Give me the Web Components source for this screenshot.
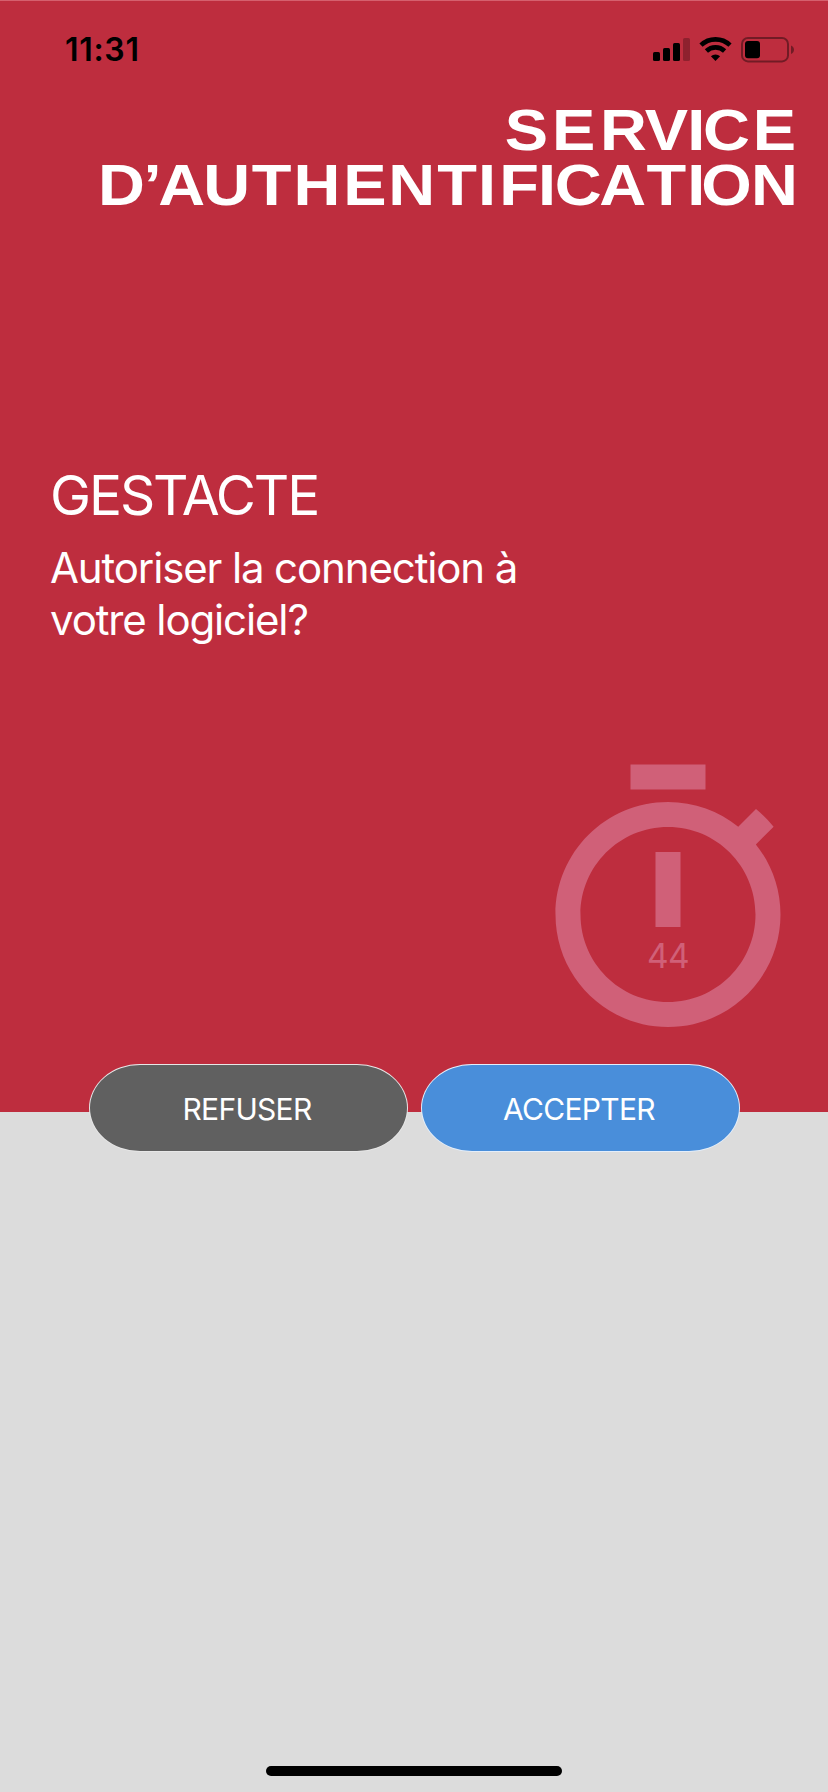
<!DOCTYPE html>
<html lang="fr">
<head>
<meta charset="utf-8">
<title>Service d'authentification</title>
<style>
    body {
        margin: 0;
        background: #dcdcdc;
        font-family: Inter, "Liberation Sans", sans-serif;
    }
</style>
</head>
<body>
<auth-screen>
    <status-bar slot="status" time="11:31"></status-bar>
    <brand-title slot="title"></brand-title>
    <auth-request slot="request" name="GESTACTE">Autoriser la connection à<br>votre logiciel?</auth-request>
    <count-down slot="timer" seconds="44"></count-down>
    <pill-button slot="actions" style="--fill: #606060">REFUSER</pill-button>
    <pill-button slot="actions" style="--fill: #498eda">ACCEPTER</pill-button>
</auth-screen>
<script>
class StatusBar extends HTMLElement {
    constructor() {
        super();
        this.root = this.attachShadow({ mode: 'open' });
        this.root.innerHTML = /*html*/`
            <style>
                :host {
                    display: flex;
                    justify-content: space-between;
                    height: 100px;
                    padding: 0 32px 0 65px;
                    box-sizing: border-box;
                    color: #000;
                }
                time {
                    padding-top: 30px;
                    font-size: 32px;
                    line-height: 40px;
                    font-weight: 600;
                    letter-spacing: 0.7px;
                }
                svg {
                    display: block;
                    margin-top: 30px;
                }
            </style>
            <time>${this.getAttribute('time')}</time>
            <svg width="146" height="40" viewBox="650 30 146 40">
                <rect x="653" y="52" width="7" height="9" rx="1.6"/>
                <rect x="663" y="48" width="7" height="13" rx="1.6"/>
                <rect x="673" y="43" width="7" height="18" rx="1.6"/>
                <rect x="683" y="38" width="7" height="23" rx="1.6" opacity=".25"/>
                <g fill="none" stroke="#000" stroke-width="4.6">
                    <path d="M701 45.2a21 21 0 0 1 29 0"/>
                    <path d="M706.4 51a13.2 13.2 0 0 1 18.2 0"/>
                </g>
                <path d="M715.5 61l-4.6-4.7a6.8 6.8 0 0 1 9.2 0z"/>
                <rect x="742" y="38" width="46" height="23.4" rx="6" fill="none" stroke="#000" stroke-width="2" opacity=".4"/>
                <path d="M791 45.5c4 1.4 4 7 0 8.6z" opacity=".4"/>
                <rect x="745" y="41" width="15" height="17.2" rx="3"/>
            </svg>
        `;
    }
}
window.customElements.define('status-bar', StatusBar);

class BrandTitle extends HTMLElement {
    // Wide lettering: every glyph is centred on its own x
    lines = [
        {
            text: 'SERVICE',
            y: 50,
            centers: [526.3, 573.7, 623.5, 666.3, 696.2, 726.5, 774.5],
        },
        {
            text: 'D’AUTHENTIFICATION',
            y: 105,
            centers: [121.5, 152.5, 181.7, 226.7, 271.5, 317, 365, 411.8, 457.2, 487, 519, 547, 578.2, 622.7, 666.4, 696.2, 726.5, 774.5],
        },
    ];
    constructor() {
        super();
        this.root = this.attachShadow({ mode: 'open' });
        const stretch = 1.12;
        const rows = this.lines.map(({ text, y, centers }) => {
            const x = centers.map(center => (center / stretch).toFixed(2)).join(' ');
            return `<text transform="scale(${stretch} 1)" x="${x}" y="${y}">${text}</text>`;
        }).join('');
        this.root.innerHTML = /*html*/`
            <style>
                :host {
                    display: block;
                    height: 120px;
                }
                svg {
                    display: block;
                    overflow: visible;
                }
                text {
                    font-family: "Liberation Sans", sans-serif;
                    font-size: 58px;
                    font-weight: 700;
                    text-anchor: middle;
                    fill: #fff;
                }
            </style>
            <svg width="828" height="120">${rows}</svg>
        `;
    }
}
window.customElements.define('brand-title', BrandTitle);

class AuthRequest extends HTMLElement {
    constructor() {
        super();
        this.root = this.attachShadow({ mode: 'open' });
        this.root.innerHTML = /*html*/`
            <style>
                :host {
                    display: block;
                    padding: 0 50px;
                    color: #fff;
                }
                h1 {
                    margin: 0;
                    font-size: 55px;
                    line-height: 66px;
                    font-weight: 400;
                    letter-spacing: -2.1px;
                }
                p {
                    margin: 14px 0 0;
                    font-size: 42px;
                    line-height: 52px;
                    letter-spacing: -1.13px;
                }
            </style>
            <h1>${this.getAttribute('name')}</h1>
            <p><slot></slot></p>
        `;
    }
}
window.customElements.define('auth-request', AuthRequest);

class CountDown extends HTMLElement {
    constructor() {
        super();
        this.root = this.attachShadow({ mode: 'open' });
        this.root.innerHTML = /*html*/`
            <style>
                :host {
                    display: grid;
                    width: 300px;
                    height: 300px;
                    color: #d06078;
                }
                svg, span {
                    grid-area: 1 / 1;
                }
                span {
                    justify-self: center;
                    padding-top: 184px;
                    font-size: 33.5px;
                    line-height: 40px;
                    font-weight: 400;
                    letter-spacing: -0.6px;
                }
            </style>
            <svg width="300" height="300" viewBox="0 0 24 24" fill="currentColor">
                <path d="M15 1H9v2h6V1zm-4 13h2V8h-2v6zm8.03-6.61l1.42-1.42c-.43-.51-.9-.99-1.41-1.41l-1.42 1.42C16.07 4.74 14.12 4 12 4c-4.97 0-9 4.03-9 9s4.02 9 9 9 9-4.03 9-9c0-2.12-.74-4.07-1.97-5.61zM12 20c-3.87 0-7-3.13-7-7s3.13-7 7-7 7 3.13 7 7-3.13 7-7 7z"/>
            </svg>
            <span>${this.getAttribute('seconds')}</span>
        `;
    }
}
window.customElements.define('count-down', CountDown);

class PillButton extends HTMLElement {
    constructor() {
        super();
        this.root = this.attachShadow({ mode: 'open' });
        this.root.innerHTML = /*html*/`
            <style>
                :host {
                    display: block;
                    width: 319px;
                    height: 88px;
                }
                button {
                    display: block;
                    width: 100%;
                    height: 100%;
                    padding: 1px 2px 0 0;
                    border: 1px solid rgba(255, 255, 255, 0.85);
                    border-radius: 51px / 44px;
                    background: var(--fill);
                    color: #fff;
                    font: 370 30px Inter, "Liberation Sans", sans-serif;
                    letter-spacing: -0.7px;
                }
            </style>
            <button><slot></slot></button>
        `;
    }
}
window.customElements.define('pill-button', PillButton);

class AuthScreen extends HTMLElement {
    constructor() {
        super();
        this.root = this.attachShadow({ mode: 'open' });
        this.root.innerHTML = /*html*/`
            <style>
                :host {
                    display: flex;
                    flex-direction: column;
                    width: 828px;
                    height: 1792px;
                    overflow: hidden;
                    background: #dcdcdc;
                }
                .panel {
                    display: flex;
                    flex-direction: column;
                    box-sizing: border-box;
                    height: 1112px;
                    border-top: 1px solid #d5606e;
                    background: #be2d3e;
                }
                slot[name="status"] {
                    display: block;
                    margin-top: -1px;
                }
                slot[name="request"] {
                    display: block;
                    margin-top: 242px;
                }
                .timer {
                    display: flex;
                    justify-content: flex-end;
                    margin-top: auto;
                    padding: 0 10px 60px 0;
                }
                .actions {
                    display: flex;
                    justify-content: center;
                    gap: 13px;
                    margin-top: -48px;
                }
                .home {
                    align-self: center;
                    width: 296px;
                    height: 10px;
                    margin: auto 0 16px;
                    border-radius: 5px;
                    background: #000;
                }
            </style>
            <div class="panel">
                <slot name="status"></slot>
                <slot name="title"></slot>
                <slot name="request"></slot>
                <div class="timer"><slot name="timer"></slot></div>
            </div>
            <div class="actions"><slot name="actions"></slot></div>
            <div class="home"></div>
        `;
    }
}
window.customElements.define('auth-screen', AuthScreen);
</script>
</body>
</html>
